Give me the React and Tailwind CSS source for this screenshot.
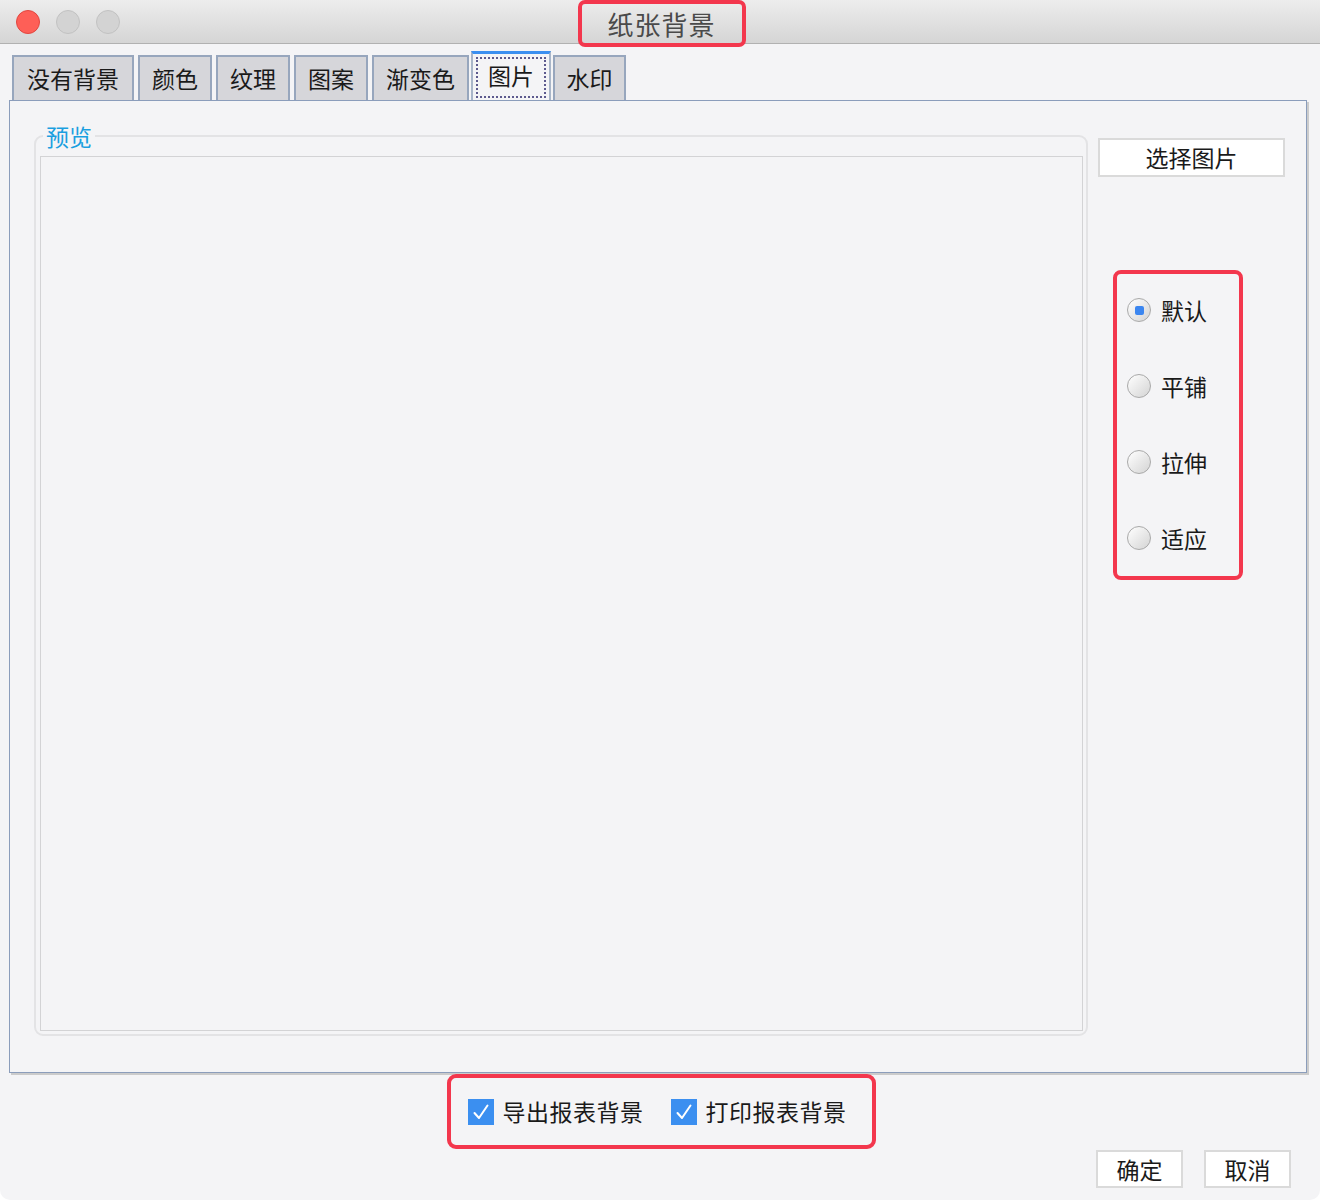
import React from "react";

const TABS = ["没有背景", "颜色", "纹理", "图案", "渐变色", "图片", "水印"];
const TAB_W = [122, 74, 74, 74, 97, 80, 73];
const TAB_GAP = ["mr-[4px]", "mr-[4px]", "mr-[4px]", "mr-[4px]", "", "ml-[2px] mr-[2px]", ""];
const FIT_MODES = ["默认", "平铺", "拉伸", "适应"];

function Tab({ label, width, active }) {
  if (active) {
    return (
      <div
        style={{ width }}
        className="h-[50px] -mb-px bg-[#f4f4f6] border-x-2 border-[#a9b6c9] border-t-[3px] border-t-[#3b8ff0] p-[3px] z-10"
      >
        <div className="h-full border-2 border-dotted border-[#5d5a8e] flex items-start justify-center pt-[1px] text-[23px] leading-[30px] text-[#1a1a1a]">
          {label}
        </div>
      </div>
    );
  }
  return (
    <div
      style={{ width }}
      className="h-[45px] bg-[#d6d6da] border-x-2 border-t-2 border-[#97a6bd] flex items-center justify-center text-[23px] text-[#1a1a1a]"
    >
      {label}
    </div>
  );
}

function Radio({ label, checked }) {
  return (
    <div className="flex items-center gap-[10px] h-[30px]">
      <span className="w-[24px] h-[24px] rounded-full border border-[#a9a9a9] bg-gradient-to-br from-[#ffffff] to-[#d4d4d4] flex items-center justify-center">
        {checked && <span className="w-[9px] h-[9px] rounded-[2px] bg-[#3b86f0]" />}
      </span>
      <span className="text-[23px] text-[#1a1a1a]">{label}</span>
    </div>
  );
}

function Check({ label }) {
  return (
    <div className="flex items-center gap-[9px]">
      <span className="w-[26px] h-[26px] bg-[#3b8ff0] flex items-center justify-center">
        <svg width="20" height="18" viewBox="0 0 20 18">
          <path d="M3.5 10 L8 15 L16.5 2.5" stroke="#fff" strokeWidth="2" fill="none" strokeLinecap="round" strokeLinejoin="round" />
        </svg>
      </span>
      <span className="text-[23px] text-[#1a1a1a] tracking-[0.5px]">{label}</span>
    </div>
  );
}

function Btn({ children, className = "" }) {
  return (
    <div className={`bg-white border-2 border-[#dadada] flex items-center justify-center text-[23px] text-[#1a1a1a] ${className}`}>
      {children}
    </div>
  );
}

export default function App() {
  return (
    <div className="w-[1320px] h-[1200px] bg-white font-['Noto_Sans_CJK_SC','Noto_Sans',sans-serif]">
      <div className="w-full h-full bg-[#f4f4f6] rounded-b-[10px] flex flex-col">
        {/* Title bar */}
        <div className="h-[44px] bg-gradient-to-b from-[#ededed] to-[#d5d5d5] border-b border-[#b1b1b1] grid grid-cols-[1fr_auto_1fr] items-start">
          <div className="flex items-center gap-[16px] pl-[16px] h-[43px]">
            <span className="w-[24px] h-[24px] rounded-full bg-[#fe5f57] border border-[#e2463f]" />
            <span className="w-[24px] h-[24px] rounded-full bg-[#d3d3d3] border border-[#c2c2c2]" />
            <span className="w-[24px] h-[24px] rounded-full bg-[#d3d3d3] border border-[#c2c2c2]" />
          </div>
          <div className="w-[168px] h-[47px] ml-[3px] border-[4px] border-[#f3374d] rounded-[7px] flex items-center justify-center text-[26px] text-[#4a4a4a] tracking-[1px]">
            纸张背景
          </div>
          <div />
        </div>

        {/* Tabs */}
        <div className="flex items-end pl-[12px] mt-[7px] h-[49px]">
          {TABS.map((t, i) => (
            <div key={t} className={TAB_GAP[i]}>
              <Tab label={t} width={TAB_W[i]} active={i === 5} />
            </div>
          ))}
        </div>

        {/* Panel */}
        <div className="ml-[9px] w-[1298px] h-[973px] border border-[#8b9dbb] shadow-[2px_2px_0_#cbcbcb] flex gap-[10px] pl-[24px] pr-[20px]">
          <fieldset className="mt-[22px] w-[1054px] h-[913px] border-2 border-[#e3e3e5] rounded-[9px] pl-[4px] pr-[3px] pb-[3px] flex flex-col">
            <legend className="ml-[3px] px-[3px] text-[23px] leading-[26px] text-[#1b9fe0]">预览</legend>
            <div className="mt-[7px] flex-1 border border-[#d3d3d5] bg-[#f4f4f6]" />
          </fieldset>

          <div className="flex flex-col pt-[37px]">
            <Btn className="w-[187px] h-[39px]">选择图片</Btn>
            <div className="mt-[93px] ml-[15px] w-[130px] h-[310px] border-[4px] border-[#f3374d] rounded-[8px] flex flex-col gap-[46px] pl-[10px] pt-[21px]">
              {FIT_MODES.map((m, i) => (
                <Radio key={m} label={m} checked={i === 0} />
              ))}
            </div>
          </div>
        </div>

        {/* Bottom checkboxes */}
        <div className="flex justify-center mt-[1px]">
          <div className="ml-[2px] w-[429px] h-[75px] border-[4px] border-[#f3374d] rounded-[9px] flex items-center gap-[27px] pl-[17px]">
            <Check label="导出报表背景" />
            <Check label="打印报表背景" />
          </div>
        </div>

        {/* Buttons */}
        <div className="flex justify-end gap-[21px] pr-[29px] mt-[1px]">
          <Btn className="w-[87px] h-[38px]">确定</Btn>
          <Btn className="w-[87px] h-[38px]">取消</Btn>
        </div>
      </div>
    </div>
  );
}
